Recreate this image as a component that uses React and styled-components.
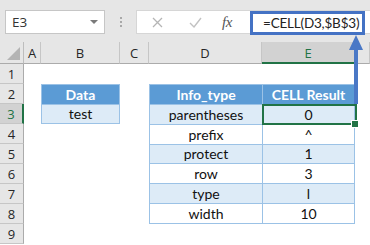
import React from "react";
import styled, { createGlobalStyle, css } from "styled-components";

const GlobalStyle = createGlobalStyle`
  html, body { margin: 0; padding: 0; background: #ffffff; }
  body { width: 370px; height: 245px; overflow: hidden; font-family: "Open Sans", "Noto Sans", sans-serif; }
  * { box-sizing: border-box; }
`;

const Page = styled.div`
  position: relative;
  width: 370px;
  height: 245px;
  overflow: hidden;
`;

const Toolbar = styled.div`
  height: 42px;
  background: #e6e6e6;
  display: flex;
  align-items: flex-start;
  padding: 10px 0 0 5px;
`;

const NameBox = styled.div`
  width: 100px;
  height: 24px;
  background: #fff;
  border: 1px solid #c6c6c6;
  display: flex;
  align-items: center;
  justify-content: space-between;
  padding: 0 6px 0 6px;
  font-family: "Open Sans", sans-serif;
  font-size: 13.5px;
  color: #333;
`;

const Caret = styled.span`
  width: 0;
  height: 0;
  border-left: 4px solid transparent;
  border-right: 4px solid transparent;
  border-top: 4px solid #7a7a7a;
`;

const Grip = styled.div`
  width: 31px;
  height: 24px;
  display: flex;
  flex-direction: column;
  align-items: center;
  justify-content: center;
  gap: 2px;
  span {
    width: 2px;
    height: 2px;
    background: #a8a8a8;
  }
`;

const FormulaBar = styled.div`
  flex: 1;
  height: 24px;
  background: #fff;
  border: 1px solid #d6d6d6;
  border-right: none;
  display: flex;
  align-items: center;
  padding-left: 13px;
`;

const IconBtn = styled.span`
  width: 14px;
  height: 14px;
  display: flex;
  align-items: center;
  justify-content: center;
  margin-right: ${(p) => p.$gap}px;
`;

const Fx = styled.span`
  font-family: "Liberation Serif", serif;
  font-style: italic;
  font-size: 15px;
  color: #555;
  width: 28px;
  letter-spacing: -0.5px;
`;

const FormulaInput = styled.div`
  width: 115px;
  height: 24px;
  margin-top: 1px;
  border: 3px solid #4472c4;
  display: flex;
  align-items: center;
  padding-left: 10px;
  font-family: "Lato", sans-serif;
  font-size: 13.5px;
  letter-spacing: -0.2px;
  color: #222;
  white-space: nowrap;
`;

const Sheet = styled.div`
  display: grid;
  grid-template-columns: 24px 17px 79px 29px 113px 93px 1fr;
  grid-template-rows: 22px repeat(9, 20px);
`;

const Corner = styled.div`
  grid-column: 1;
  grid-row: 1;
  background: #e6e6e6;
  border-right: 1px solid #bdbdbd;
  border-bottom: 1px solid #ababab;
  position: relative;
  svg { position: absolute; right: 3px; bottom: 3px; }
`;

const ColHead = styled.div`
  grid-row: 1;
  grid-column: ${(p) => p.$col};
  background: ${(p) => (p.$sel ? "#d2d2d2" : "#e6e6e6")};
  border-right: 1px solid #c6c6c6;
  border-bottom: ${(p) => (p.$sel ? "2px solid #217346" : "1px solid #ababab")};
  display: flex;
  align-items: center;
  justify-content: center;
  font-family: "Open Sans", sans-serif;
  font-size: 13px;
  color: ${(p) => (p.$sel ? "#217346" : "#262626")};
  padding-top: 1px;
`;

const RowHead = styled.div`
  grid-column: 1;
  grid-row: ${(p) => p.$row + 1};
  background: ${(p) => (p.$sel ? "#d2d2d2" : "#e6e6e6")};
  border-bottom: 1px solid #c6c6c6;
  border-right: ${(p) => (p.$sel ? "2px solid #217346" : "1px solid #ababab")};
  display: flex;
  align-items: center;
  justify-content: center;
  font-family: "Open Sans", sans-serif;
  font-size: 13px;
  color: ${(p) => (p.$sel ? "#217346" : "#262626")};
`;

const Table = styled.div`
  grid-column: ${(p) => p.$cols};
  grid-row: ${(p) => p.$rows};
  display: grid;
  grid-template-columns: ${(p) => p.$tpl};
  grid-auto-rows: 1fr;
  gap: 1px;
  background: #9bc2e6;
  border: 1px solid #9bc2e6;
`;

const TCell = styled.div`
  position: relative;
  display: flex;
  align-items: center;
  justify-content: center;
  font-family: "Lato", sans-serif;
  font-size: 14px;
  color: #111;
  background: ${(p) => (p.$band ? "#ddebf7" : "#ffffff")};
  ${(p) =>
    p.$head &&
    css`
      background: #5b9bd5;
      color: #fff;
      font-weight: 700;
    `}
  ${(p) =>
    p.$active &&
    css`
      &::after {
        content: "";
        position: absolute;
        left: -1px;
        top: -1px;
        right: -3px;
        bottom: -1px;
        border: 2px solid #217346;
      }
      &::before {
        content: "";
        position: absolute;
        right: -5px;
        bottom: -4px;
        width: 6px;
        height: 6px;
        background: #217346;
        border: 1px solid #fff;
        z-index: 1;
      }
    `}
`;

const Arrow = styled.svg`
  position: absolute;
  left: 348px;
  top: 34px;
`;

const columns = [
  { c: 2, l: "A" },
  { c: 3, l: "B" },
  { c: 4, l: "C" },
  { c: 5, l: "D" },
  { c: 6, l: "E", sel: true },
  { c: 7, l: "" },
];

const info = [
  ["parentheses", "0"],
  ["prefix", "^"],
  ["protect", "1"],
  ["row", "3"],
  ["type", "l"],
  ["width", "10"],
];

export default function App() {
  return (
    <Page>
      <GlobalStyle />
      <Toolbar>
        <NameBox>
          E3
          <Caret />
        </NameBox>
        <Grip>
          <span />
          <span />
          <span />
        </Grip>
        <FormulaBar>
          <IconBtn $gap={24}>
            <svg width="11" height="11" viewBox="0 0 11 11">
              <path d="M1 1 L10 10 M10 1 L1 10" stroke="#b5b5b5" strokeWidth="1.3" fill="none" />
            </svg>
          </IconBtn>
          <IconBtn $gap={20}>
            <svg width="13" height="11" viewBox="0 0 13 11">
              <path d="M1 6 L5 10 L12 1" stroke="#c2c2c2" strokeWidth="1.4" fill="none" />
            </svg>
          </IconBtn>
          <Fx>fx</Fx>
          <FormulaInput>=CELL(D3,$B$3)</FormulaInput>
        </FormulaBar>
      </Toolbar>
      <Sheet>
        <Corner>
          <svg width="13" height="13" viewBox="0 0 13 13">
            <path d="M13 0 L13 13 L0 13 Z" fill="#b4b4b4" />
          </svg>
        </Corner>
        {columns.map((col) => (
          <ColHead key={col.c} $col={col.c} $sel={col.sel}>
            {col.l}
          </ColHead>
        ))}
        {[1, 2, 3, 4, 5, 6, 7, 8, 9].map((r) => (
          <RowHead key={r} $row={r} $sel={r === 3}>
            {r}
          </RowHead>
        ))}
        <Table $cols="3 / 4" $rows="3 / 5" $tpl="1fr">
          <TCell $head>Data</TCell>
          <TCell $band>test</TCell>
        </Table>
        <Table $cols="5 / 7" $rows="3 / 10" $tpl="112px 1fr">
          <TCell $head>Info_type</TCell>
          <TCell $head>CELL Result</TCell>
          {info.map(([k, v], i) => (
            <React.Fragment key={k}>
              <TCell $band={i % 2 === 0}>{k}</TCell>
              <TCell $band={i % 2 === 0} $active={i === 0}>
                {v}
              </TCell>
            </React.Fragment>
          ))}
        </Table>
      </Sheet>
      <Arrow width="16" height="72" viewBox="0 0 16 72">
        <path d="M8 1 L15 16 L1 16 Z" fill="#4a78c6" />
        <rect x="6" y="14" width="4" height="56" fill="#4a78c6" />
      </Arrow>
    </Page>
  );
}
